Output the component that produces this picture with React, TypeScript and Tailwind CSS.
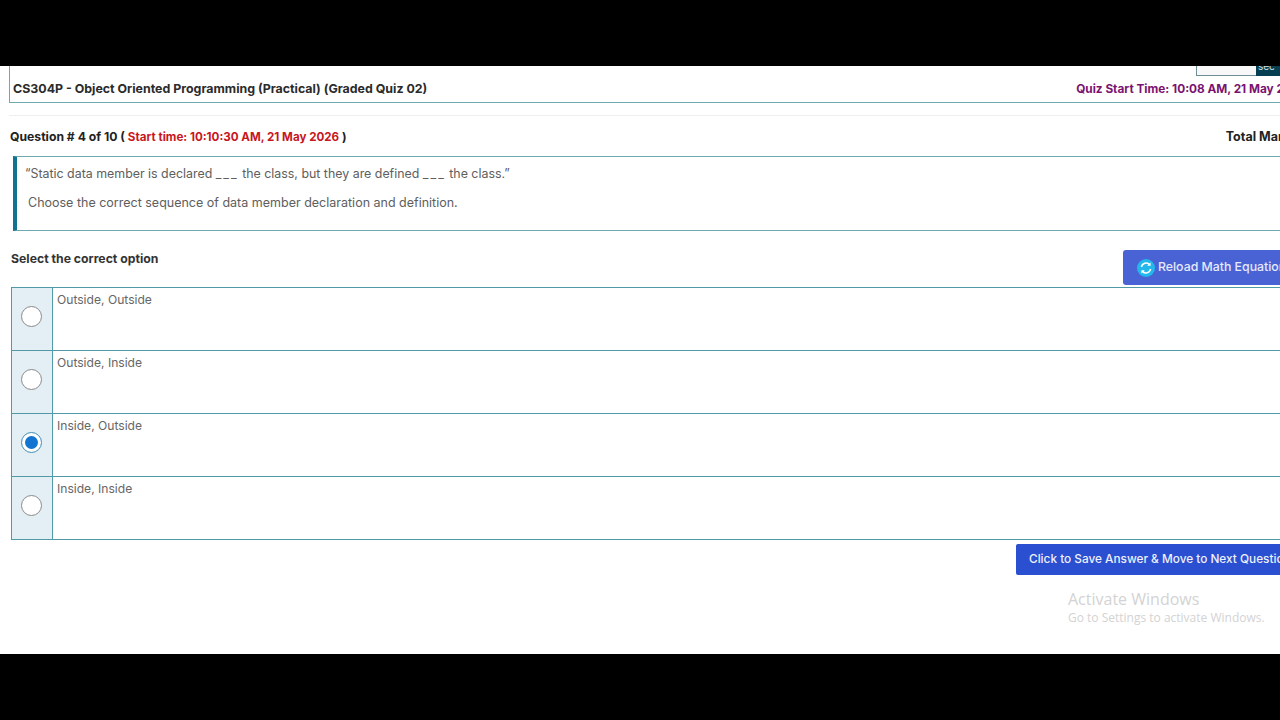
import React from 'react';

const options = [
  { label: 'Outside, Outside', checked: false },
  { label: 'Outside, Inside', checked: false },
  { label: 'Inside, Outside', checked: true },
  { label: 'Inside, Inside', checked: false },
];

const Radio = ({ checked }: { checked: boolean }) =>
  checked ? (
    <span className="flex h-[21px] w-[21px] items-center justify-center rounded-full border border-[#3f8fb0] bg-white">
      <span className="h-[13px] w-[13px] rounded-full bg-[#1273d0]" />
    </span>
  ) : (
    <span className="h-[21px] w-[21px] rounded-full border border-[#8a8a8a] bg-white" />
  );

const Blank = () => <span className="tracking-[2px]">___</span>;

export default function App() {
  return (
    <div className="flex h-[720px] w-[1280px] flex-col overflow-hidden bg-black font-['Inter','Liberation_Sans',sans-serif]">
      <div className="h-[66px] shrink-0" />
      <main className="relative h-[588px] w-[1280px] overflow-hidden bg-white">
        {/* clipped tab above the quiz header */}
        <div className="absolute left-[1196px] top-0 flex h-[10px] w-[100px]">
          <div className="w-[60px] border-b border-l border-[#6b8f94] bg-[#f8f8f8]" />
          <div className="flex-1 overflow-hidden bg-[#063f52] pl-[2px] text-[10px] leading-[1px] text-[#cfe0e4]">sec</div>
        </div>

        <div className="flex w-[1500px] flex-col">
          {/* Quiz title bar */}
          <div className="ml-[9px] flex h-[37px] w-[1275px] items-end justify-between overflow-hidden border-b border-l border-[#6fa8ad] pb-[4px] pl-[3px]">
            <span className="text-[12.4px] font-bold leading-[18px] whitespace-nowrap text-[#2b2b2b]">
              CS304P - Object Oriented Programming (Practical) (Graded Quiz 02)
            </span>
            <span className="-mr-[23px] text-[11.8px] font-bold leading-[18px] whitespace-nowrap text-[#7a1370]">
              Quiz Start Time: 10:08 AM, 21 May 2026
            </span>
          </div>

          <div className="ml-[9px] mt-[12px] h-px w-[1271px] bg-[#eeeeee]" />

          {/* Question heading */}
          <div className="ml-[10px] mt-[12px] flex h-[18px] w-[1300px] items-center justify-between">
            <span className="text-[12.2px] font-bold whitespace-nowrap text-[#222222]">
              Question # 4 of 10 ( <span className="text-[11.6px] text-[#c8161d]">Start time: 10:10:30 AM, 21 May 2026</span> )
            </span>
            <span className="text-[12.5px] font-bold whitespace-nowrap text-[#222222]">Total Marks: 1</span>
          </div>

          {/* Question text */}
          <div className="ml-[13px] mt-[10px] h-[75px] w-[1300px] border-y border-l-[4px] border-y-[#6fa8ad] border-l-[#0f7391] pl-[8px] pt-[9px] text-[12.5px] text-[#5e5e5e]">
            <p className="h-[18px] text-[12.4px] leading-[16px] whitespace-nowrap">
              “Static data member is declared <Blank /> the class, but they are defined <Blank /> the class.”
            </p>
            <p className="mt-[10px] pl-[3px] leading-[18px] whitespace-nowrap">
              Choose the correct sequence of data member declaration and definition.
            </p>
          </div>

          {/* Select heading and reload button */}
          <div className="mt-[19px] flex h-[37px] w-[1400px] items-start">
            <span className="ml-[11px] mt-px text-[12.25px] leading-[16px] font-bold text-[#333333]">Select the correct option</span>
            <button className="ml-auto mr-[107px] flex h-[35px] w-[170px] items-center gap-[3px] rounded-[3px] bg-[#4a63d4] pl-[14px] text-[12.3px] font-medium whitespace-nowrap text-[#e6e9fb]">
              <svg width="18" height="18" viewBox="0 0 18 18" className="shrink-0">
                <circle cx="9" cy="9" r="9" fill="#22b8ec" />
                <path d="M4.5 8a4.6 4.6 0 0 1 8-2.4M13.5 10a4.6 4.6 0 0 1-8 2.4" stroke="#ffffff" strokeWidth="1.6" fill="none" />
                <path d="M13.6 3.4v3.4h-3.4zM4.4 14.6v-3.4h3.4z" fill="#ffffff" />
              </svg>
              Reload Math Equation
            </button>
          </div>

          {/* Options */}
          <div className="ml-[11px] w-[1300px] border-l border-t border-[#4f9aa5]">
            {options.map((o) => (
              <div key={o.label} className="flex h-[63px] border-b border-[#4f9aa5]">
                <div className="flex w-[41px] shrink-0 justify-center border-r border-[#4f9aa5] bg-[#e3eef5] pr-px pt-[18px]">
                  <Radio checked={o.checked} />
                </div>
                <div className="pl-[4px] pt-[4px] text-[12.1px] leading-[16px] text-[#666666]">{o.label}</div>
              </div>
            ))}
          </div>

          <button className="ml-[1016px] mt-[4px] flex h-[31px] w-[300px] items-center rounded-[2px] bg-[#2a4fd0] pl-[13px] text-[11.8px] font-medium whitespace-nowrap text-[#eef1fc]">
            Click to Save Answer &amp; Move to Next Question
          </button>
        </div>

        {/* Windows activation watermark */}
        <div className="absolute left-[1068px] top-[523px] font-['Open_Sans','Liberation_Sans',sans-serif] text-[#d3d3d3]">
          <div className="text-[16px] leading-[20px]">Activate Windows</div>
          <div className="text-[12px] leading-[18px]">Go to Settings to activate Windows.</div>
        </div>
      </main>
    </div>
  );
}
